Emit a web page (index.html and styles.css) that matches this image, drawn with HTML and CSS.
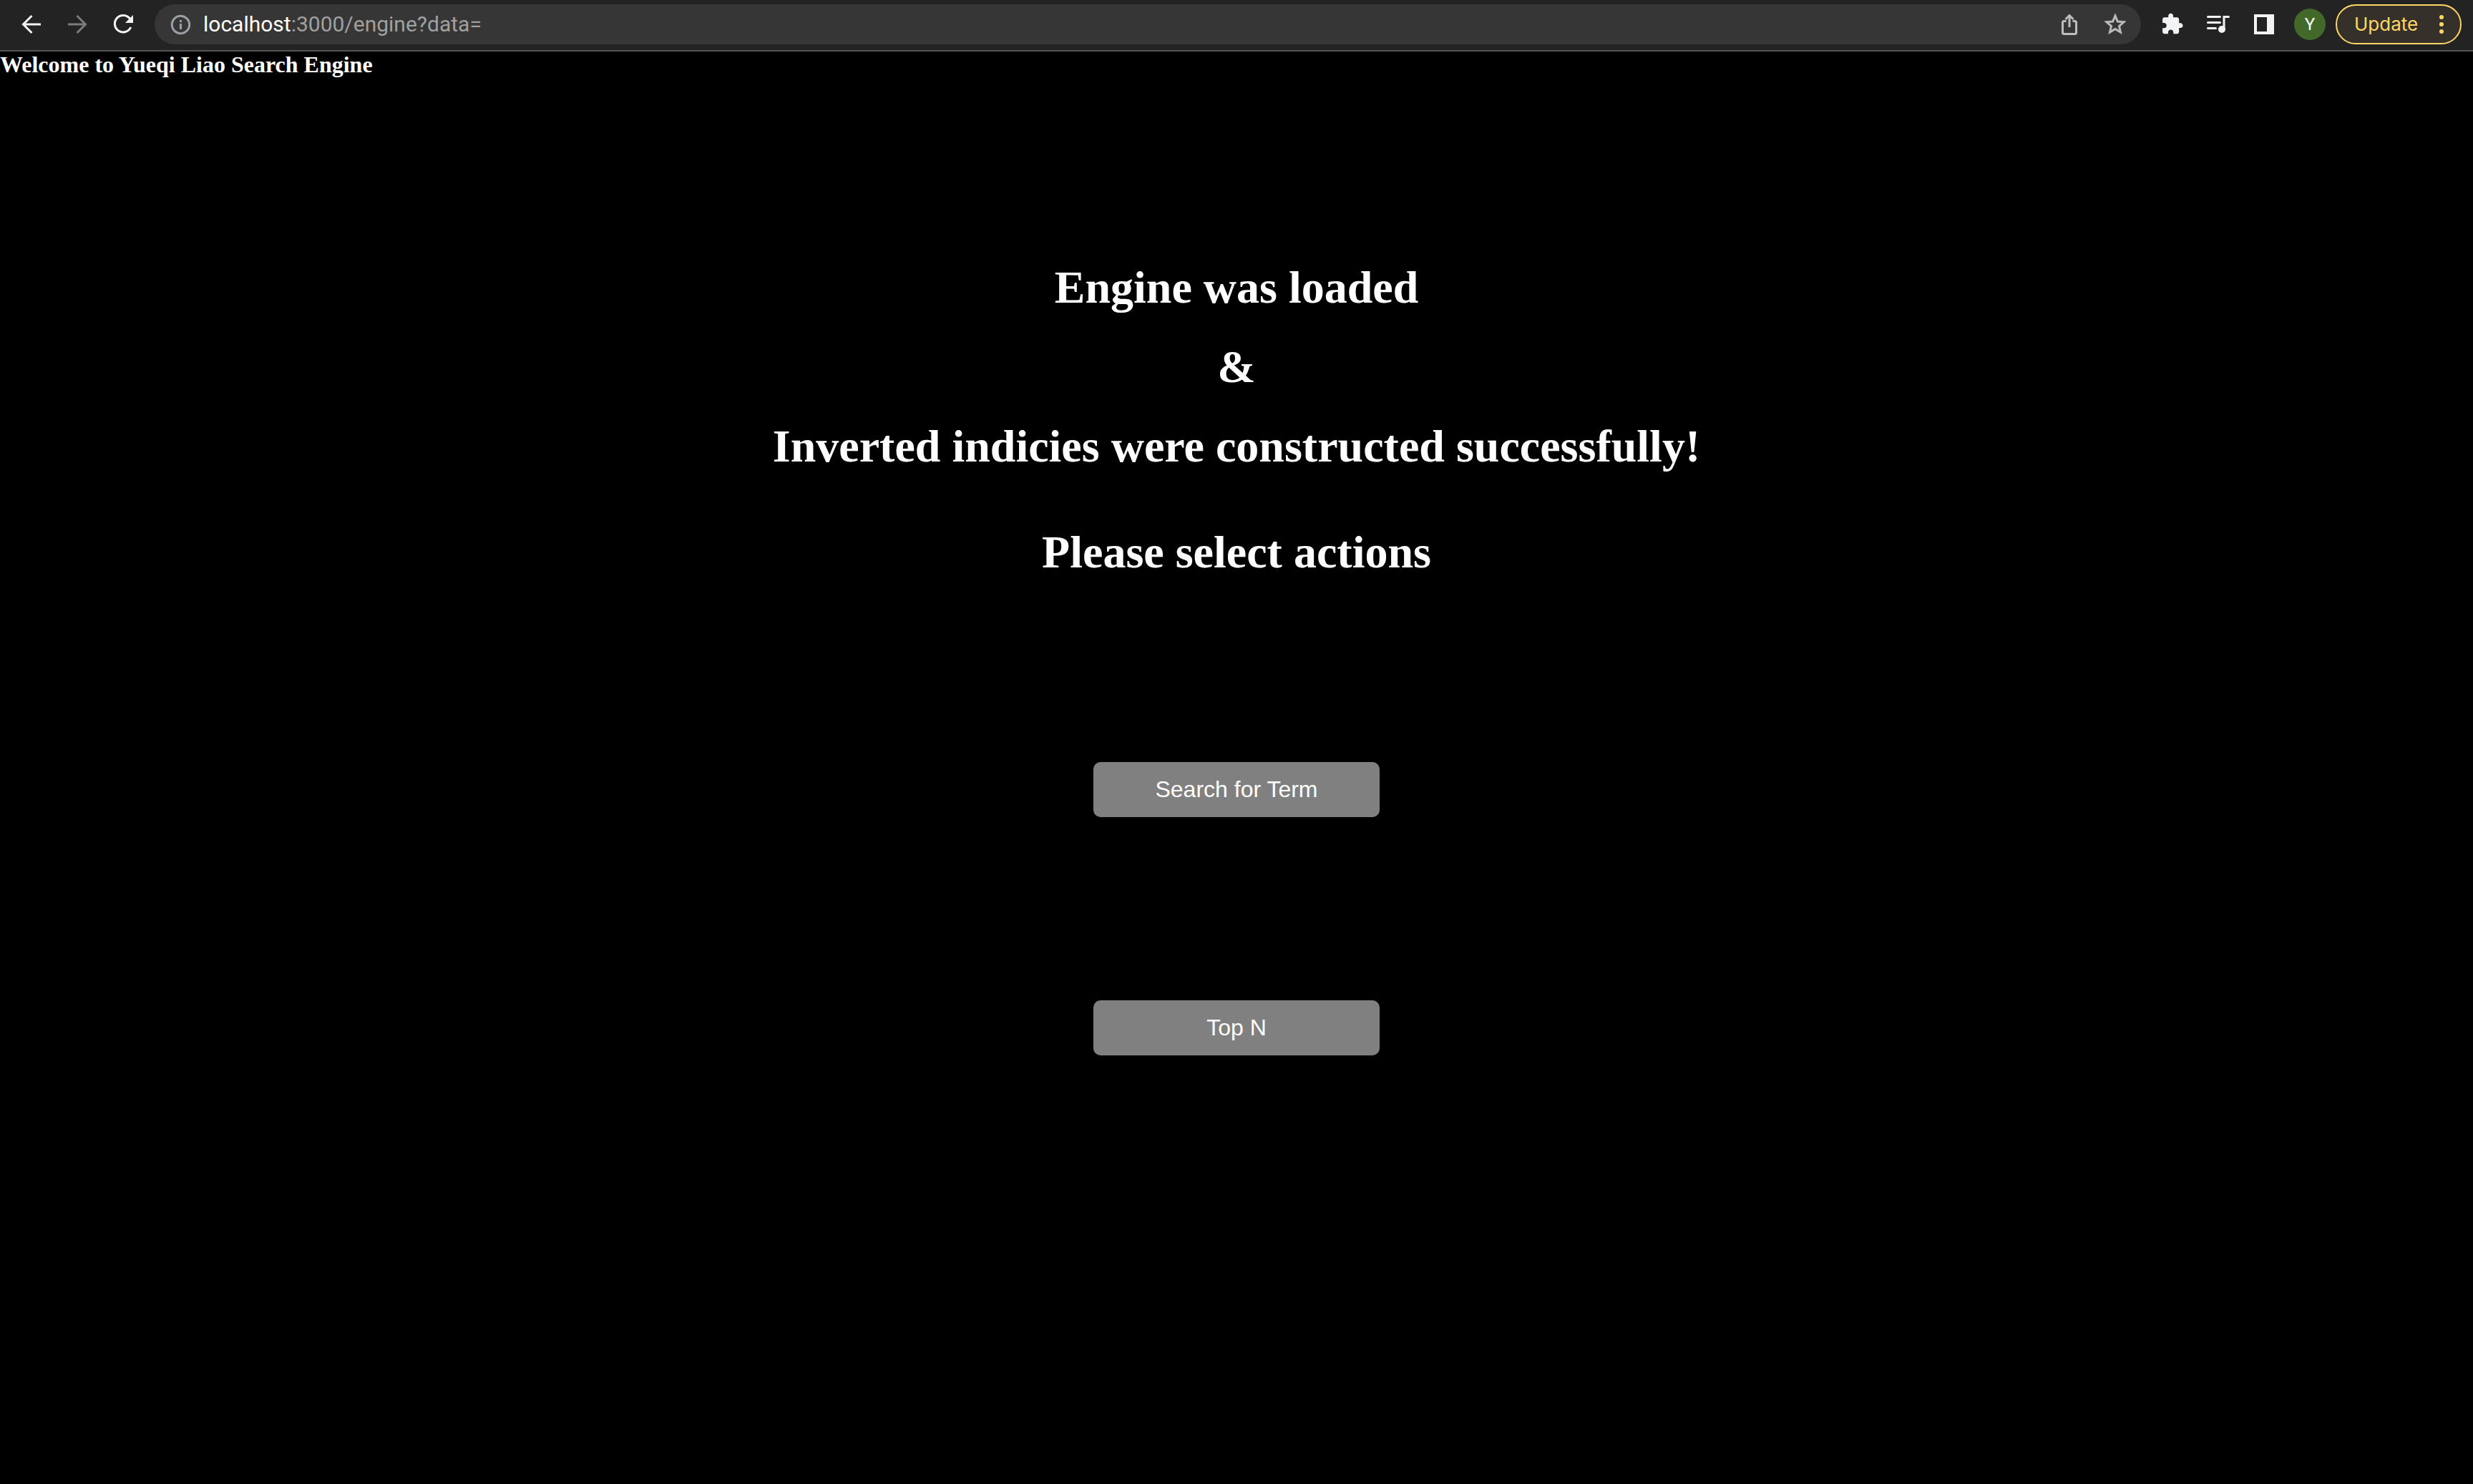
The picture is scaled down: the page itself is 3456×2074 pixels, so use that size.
FILE: index.html
```html
<!DOCTYPE html>
<html lang="en">
<head>
  <meta charset="utf-8">
  <meta name="viewport" content="width=device-width, initial-scale=1">
  <title>Yueqi Liao Search Engine</title>
  <link rel="stylesheet" href="styles.css">
</head>
<body>
  <header class="toolbar">
    <button class="tool" type="button" aria-label="Back">
      <svg class="icon" viewBox="0 0 40 40" fill="none" stroke="#f1f3f4" stroke-width="3"><path d="M33 20H9M20.500 8L8.500 20l12 12"/></svg>
    </button>
    <button class="tool" type="button" aria-label="Forward" disabled>
      <svg class="icon" viewBox="0 0 40 40" fill="none" stroke="#7c7c7c" stroke-width="3"><path d="M7 20h24M19.500 8l12 12-12 12"/></svg>
    </button>
    <button class="tool" type="button" aria-label="Reload">
      <svg class="icon" viewBox="0 0 40 40"><path d="M29.500 12.200A11.700 11.700 0 1 0 30.800 24" fill="none" stroke="#f1f3f4" stroke-width="3"/><path d="M34 7v11H23z" fill="#f1f3f4"/></svg>
    </button>

    <div class="address">
      <svg class="icon address-info" viewBox="0 0 40 40" aria-hidden="true"><circle cx="20.500" cy="20.500" r="12.200" fill="none" stroke="#9aa0a6" stroke-width="3"/><path d="M19 19h3v8h-3zM19 14h3v3h-3z" fill="#9aa0a6"/></svg>
      <label class="address-host" for="path">localhost</label>
      <input class="address-path" id="path" type="text" value=":3000/engine?data=" spellcheck="false">
      <button class="tool" type="button" aria-label="Share">
        <svg class="icon" viewBox="0 0 40 40" fill="none" stroke="#bdbdbd" stroke-width="3"><path d="M15.500 15.500h-3a2 2 0 0 0-2 2V31.500a2 2 0 0 0 2 2h15a2 2 0 0 0 2-2V17.500a2 2 0 0 0-2-2h-3M20 24V8M14.500 13L20 7.500l5.500 5.500"/></svg>
      </button>
      <button class="tool" type="button" aria-label="Bookmark this page">
        <svg class="icon" viewBox="-1.300 -1.300 26.600 26.600" fill="#bdbdbd" stroke="#bdbdbd" stroke-width=".4"><path d="M22 9.240l-7.190-.62L12 2 9.190 8.630 2 9.240l5.460 4.730L5.820 21 12 17.270 18.180 21l-1.630-7.030L22 9.240zM12 15.400l-3.760 2.270 1-4.280-3.320-2.880 4.380-.38L12 6.100l1.710 4.040 4.380.38-3.320 2.880 1 4.280L12 15.400z"/></svg>
      </button>
    </div>

    <div class="actions">
      <button class="tool" type="button" aria-label="Extensions">
        <svg class="icon" viewBox="-2.500 -2.500 29.500 29.500" fill="#f1f3f4"><path d="M20.500 11H19V7c0-1.100-.9-2-2-2h-4V3.500C13 2.120 11.880 1 10.500 1S8 2.120 8 3.500V5H4c-1.100 0-1.990.9-1.990 2v3.800H3.500c1.490 0 2.700 1.210 2.700 2.700s-1.210 2.700-2.700 2.700H2V20c0 1.100.9 2 2 2h3.800v-1.500c0-1.490 1.210-2.700 2.700-2.700s2.700 1.210 2.700 2.700V22H17c1.100 0 2-.9 2-2v-4h1.500c1.380 0 2.500-1.120 2.500-2.500S21.880 11 20.500 11z"/></svg>
      </button>
      <button class="tool" type="button" aria-label="Media controls">
        <svg class="icon" viewBox="0 0 40 40" fill="none" stroke="#f1f3f4" stroke-width="3" stroke-linecap="round"><path d="M5.500 9.500h17M5.500 17.500h17M5.500 25.500h11"/><path d="M28 27V9.500h6.500"/><circle cx="25" cy="27" r="5" fill="#f1f3f4" stroke="none"/></svg>
      </button>
      <button class="tool" type="button" aria-label="Side panel">
        <svg class="icon" viewBox="0 0 40 40" fill="#f1f3f4"><path fill-rule="evenodd" d="M6 6h28v28H6zM10 10v20h14V10z"/></svg>
      </button>
      <button class="tool" type="button" aria-label="Profile"><span class="avatar">Y</span></button>
      <button class="update" type="button">
        Update
        <svg class="update-dots" viewBox="0 0 8 28" fill="#fdd663" aria-hidden="true"><circle cx="4" cy="4" r="3"/><circle cx="4" cy="14" r="3"/><circle cx="4" cy="24" r="3"/></svg>
      </button>
    </div>
  </header>

  <main class="page">
    <h1 class="site-title">Welcome to Yueqi Liao Search Engine</h1>
    <section class="status">
      <p class="status-line">Engine was loaded</p>
      <p class="status-line">&amp;</p>
      <p class="status-line">Inverted indicies were constructed successfully!</p>
    </section>
    <h2 class="prompt">Please select actions</h2>
    <div class="choices">
      <button class="choice" type="button">Search for Term</button>
      <button class="choice" type="button">Top N</button>
    </div>
  </main>
</body>
</html>
```

FILE: styles.css
```css
* {
  box-sizing: border-box;
}

body {
  margin: 0;
  min-height: 100vh;
  background: #000;
  color: #fff;
  font-family: "Liberation Serif", "Times New Roman", serif;
}

button,
input {
  margin: 0;
  padding: 0;
  border: 0;
  background: none;
  color: inherit;
  font: inherit;
}

/* Browser toolbar */
.toolbar {
  display: flex;
  align-items: center;
  gap: 12px;
  padding: 6px 16px 8px 12px;
  border-bottom: 2px solid #545454;
  background: #232323;
  font-family: Inter, "Liberation Sans", sans-serif;
  font-size: 26px;
  line-height: 36px;
}

.tool {
  display: flex;
  flex: none;
  align-items: center;
  justify-content: center;
  width: 64px;
  height: 56px;
}

.toolbar > .tool + .tool {
  margin-left: -12px;
}

.icon {
  display: block;
  flex: none;
  width: 40px;
  height: 40px;
}

.address {
  display: flex;
  flex: 1;
  align-items: center;
  min-width: 0;
  height: 56px;
  padding: 0 4px 0 16px;
  border-radius: 28px;
  background: #363636;
}

.address-info {
  margin-right: 12px;
}

.address-host,
.address-path {
  font-family: Roboto, "Liberation Sans", sans-serif;
  font-size: 30px;
}

.address-path {
  flex: 1;
  min-width: 0;
  height: 36px;
  color: #a0a0a0;
  outline: 0;
}

.actions {
  display: flex;
  align-items: center;
}

.avatar {
  width: 44px;
  border-radius: 22px;
  background: #43692a;
  font-family: Roboto, "Liberation Sans", sans-serif;
  font-size: 24px;
  line-height: 44px;
  text-align: center;
}

.update {
  display: flex;
  align-items: center;
  justify-content: space-between;
  width: 176px;
  height: 56px;
  margin-left: 4px;
  padding: 0 22px 0 24px;
  border: 2px solid #fdd663;
  border-radius: 28px;
  background: #35312a;
  color: #fdd663;
}

.update-dots {
  width: 8px;
  height: 28px;
}

/* Page content */
.page {
  display: flex;
  flex-direction: column;
  align-items: center;
}

.site-title {
  align-self: flex-start;
  margin: 0;
  font-size: 32px;
  line-height: 36px;
}

.status {
  padding-top: 238px;
  text-align: center;
}

.status-line,
.prompt {
  margin: 0;
  font-size: 64px;
  font-weight: bold;
  line-height: 111px;
}

.prompt {
  padding-top: 37px;
}

.choices {
  display: flex;
  flex-direction: column;
  gap: 256px;
  padding: 238px 0;
}

.choice {
  width: 400px;
  height: 77px;
  border-radius: 10px;
  background: #808080;
  color: #fff;
  font-family: "Liberation Sans", Arial, sans-serif;
  font-size: 32px;
}
```
